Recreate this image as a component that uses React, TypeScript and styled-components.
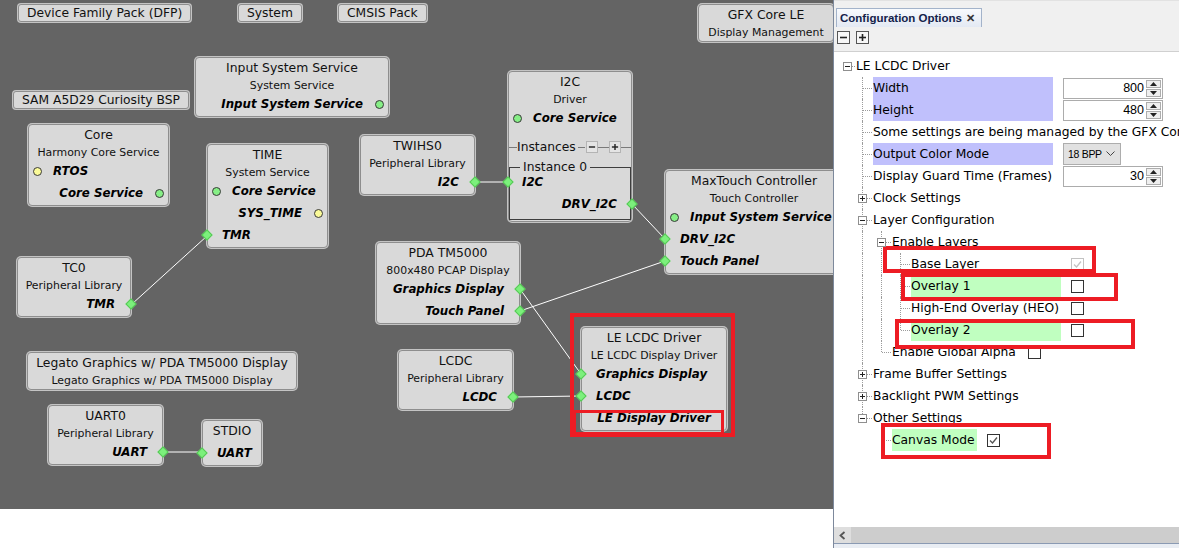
import React from 'react'
import styled, { createGlobalStyle } from 'styled-components'

const GlobalStyle = createGlobalStyle`
  html, body { margin: 0; padding: 0; background: #fff; }
  body { font-family: "DejaVu Sans", Verdana, sans-serif; }
  * { box-sizing: border-box; }
`

const Screen = styled.div`
  display: flex;
  width: 1179px;
  height: 548px;
  overflow: hidden;
`

const CanvasColumn = styled.div`
  width: 833px;
  flex: none;
  display: flex;
  flex-direction: column;
`

const Canvas = styled.div`
  position: relative;
  height: 509px;
  background: #646464;
  overflow: hidden;
`

const Wires = styled.svg`
  position: absolute;
  left: 0;
  top: 0;
`

const Pill = styled.div<{ $x: number; $y: number }>`
  position: absolute;
  left: ${p => p.$x}px;
  top: ${p => p.$y}px;
  height: 18px;
  padding: 0 8px;
  font-size: 12.3px;
  line-height: 16px;
  color: #111;
  white-space: nowrap;
  background: #d9d9d9;
  border: 1px solid #8e8e8e;
  border-radius: 3px;
  box-shadow: 0 0 0 1px #c4c4c4;
`

const NodeBox = styled.div<{ $x: number; $y: number; $w: number }>`
  position: absolute;
  left: ${p => p.$x}px;
  top: ${p => p.$y}px;
  width: ${p => p.$w}px;
  display: flex;
  flex-direction: column;
  padding-bottom: 1px;
  background: #d9d9d9;
  border: 1px solid #8e8e8e;
  border-radius: 4px;
  box-shadow: 0 0 0 1px #c4c4c4;
  color: #111;
`

const Title = styled.div`
  height: 19px;
  line-height: 20px;
  font-size: 12.4px;
  text-align: center;
  white-space: nowrap;
`

const Sub = styled.div`
  height: 16px;
  line-height: 17px;
  font-size: 10.9px;
  text-align: center;
  white-space: nowrap;
`

type Side = 'left' | 'right' | 'center'
type Kind = 'dot' | 'ydot' | 'diamond' | 'none'

const PortRow = styled.div<{ $side: Side; $kind: Kind; $group?: boolean }>`
  position: relative;
  height: 22px;
  display: flex;
  align-items: center;
  justify-content: ${p => (p.$side === 'left' ? 'flex-start' : p.$side === 'right' ? 'flex-end' : 'center')};
  padding-left: ${p => (p.$side !== 'left' ? 0 : p.$kind === 'diamond' ? (p.$group ? 12 : 14) : 24)}px;
  padding-right: ${p => (p.$side !== 'right' ? 0 : p.$kind === 'diamond' ? (p.$group ? 13 : 15) : 25)}px;
  font-size: 11.8px;
  font-weight: bold;
  font-style: oblique;
  color: #000;
  white-space: nowrap;
`

const Dot = styled.span<{ $side: Side; $yellow?: boolean }>`
  position: absolute;
  top: 50%;
  ${p => (p.$side === 'left' ? 'left' : 'right')}: 4px;
  width: 9px;
  height: 9px;
  margin-top: -4.5px;
  border-radius: 50%;
  background: ${p => (p.$yellow ? '#fbfb98' : '#86ef86')};
  border: 1px solid #3a3a3a;
`

const Diamond = styled.span<{ $side: Side; $off: number }>`
  position: absolute;
  top: 50%;
  ${p => (p.$side === 'left' ? 'left' : 'right')}: ${p => p.$off}px;
  width: 8px;
  height: 8px;
  margin-top: -4px;
  transform: rotate(45deg);
  background: #7cf07c;
  border: 1px solid #55c855;
`

interface PortDef {
  label: string
  side: Side
  kind: Kind
}

const Port = ({ port, group }: { port: PortDef; group?: boolean }) => (
  <PortRow $side={port.side} $kind={port.kind} $group={group}>
    {(port.kind === 'dot' || port.kind === 'ydot') && <Dot $side={port.side} $yellow={port.kind === 'ydot'} />}
    {port.kind === 'diamond' && <Diamond $side={port.side} $off={group ? -6 : -5} />}
    {port.label}
  </PortRow>
)

const InstancesRow = styled.div`
  height: 24px;
  margin-top: 6px;
  display: flex;
  align-items: center;
  font-size: 12.3px;
  color: #111;
`

const Rule = styled.span<{ $w?: number }>`
  height: 1px;
  background: #7a7a7a;
  flex: ${p => (p.$w ? `none` : '1')};
  width: ${p => (p.$w ? `${p.$w}px` : 'auto')};
  margin: ${p => (p.$w ? '0' : '0 1px 0 2px')};
`

const MiniBtn = styled.span`
  width: 12px;
  height: 12px;
  flex: none;
  display: flex;
  align-items: center;
  justify-content: center;
  background: #e4e4e4;
  border: 1px solid #b4b4b4;
`

const Group = styled.fieldset`
  margin: 1px 0 0 0;
  padding: 0 0 4px 0;
  min-width: 0;
  border: 1px solid #3e3e3e;
`

const GroupLegend = styled.legend`
  margin-left: 10px;
  padding: 0 3px;
  font-size: 12.3px;
  line-height: 14px;
  color: #111;
`

const GroupBody = styled.div`
  margin-top: -3px;
`

const Annot = styled.div<{ $x: number; $y: number; $w: number; $h: number; $t: number }>`
  position: absolute;
  left: ${p => p.$x}px;
  top: ${p => p.$y}px;
  width: ${p => p.$w}px;
  height: ${p => p.$h}px;
  border: ${p => p.$t}px solid #ed1c24;
  pointer-events: none;
`

const BlankArea = styled.div`
  flex: 1;
  background: #fff;
`

/* ---------- right panel ---------- */

const Panel = styled.div`
  position: relative;
  flex: 1;
  height: 548px;
  display: flex;
  flex-direction: column;
  border-left: 1px solid #7d899c;
  background: #fff;
  overflow: hidden;
  font-family: "DejaVu Sans", Verdana, sans-serif;
  font-size: 12.3px;
  color: #000;
`

const TabStrip = styled.div`
  height: 27px;
  flex: none;
  display: flex;
  align-items: flex-end;
  padding-left: 2px;
  background: #f0f0f0;
  border-top: 1px solid #e2e2e2;
`

const Tab = styled.div`
  height: 19px;
  width: 146px;
  display: flex;
  align-items: center;
  justify-content: space-between;
  padding: 0 6px 0 3px;
  background: linear-gradient(#f8fafd, #e3e9f3);
  border: 1px solid #a3b3ca;
  border-bottom: none;
  font-family: "Liberation Sans", Arial, sans-serif;
  font-weight: bold;
  font-size: 11.5px;
  color: #14224a;
`

const TabClose = styled.span`
  font-size: 11px;
  color: #333;
`

const Toolbar = styled.div`
  height: 25px;
  flex: none;
  display: flex;
  align-items: flex-start;
  gap: 6px;
  padding: 4px 0 0 3px;
  background: #f0f0f0;
  border-bottom: 1px solid #d0d0d0;
`

const ToolBtn = styled.span`
  width: 13px;
  height: 13px;
  display: flex;
  align-items: center;
  justify-content: center;
  background: #f7f7f7;
  border: 1px solid #555;
`

const Tree = styled.div`
  flex: 1;
  padding-top: 3px;
  overflow: hidden;
`

const Row = styled.div<{ $pl: number }>`
  height: 22px;
  display: flex;
  align-items: center;
  white-space: nowrap;
  padding-left: ${p => p.$pl}px;
`

type VLine = 'full' | 'half' | 'none'

const TreeCell = styled.span<{ $v: VLine; $h: boolean; $w?: number; $from?: number }>`
  position: relative;
  flex: none;
  width: ${p => p.$w ?? 19}px;
  height: 22px;
  &::before {
    content: '';
    display: ${p => (p.$v === 'none' ? 'none' : 'block')};
    position: absolute;
    left: 9px;
    top: 0;
    height: ${p => (p.$v === 'full' ? 22 : 11)}px;
    border-left: 1px dotted #9c9c9c;
  }
  &::after {
    content: '';
    display: ${p => (p.$h ? 'block' : 'none')};
    position: absolute;
    left: ${p => p.$from ?? 10}px;
    right: 0;
    top: 11px;
    border-top: 1px dotted #9c9c9c;
  }
`

const ExpanderBox = styled.svg`
  position: absolute;
  left: 5px;
  top: 7px;
  z-index: 1;
`

const Label = styled.span<{ $bg?: string; $w?: number }>`
  display: inline-block;
  margin-left: 1px;
  height: 22px;
  line-height: 22px;
  padding-right: 2px;
  background: ${p => p.$bg ?? 'transparent'};
  width: ${p => (p.$w ? `${p.$w}px` : 'auto')};
  flex: none;
`

const Spinner = styled.div`
  margin-left: 10px;
  width: 100px;
  height: 21px;
  flex: none;
  display: flex;
  background: #fff;
  border: 1px solid #acacac;
`

const SpinValue = styled.span`
  flex: 1;
  text-align: right;
  padding-right: 2px;
  line-height: 19px;
  font-family: "Liberation Sans", Arial, sans-serif;
  font-size: 12.5px;
`

const SpinButtons = styled.div`
  width: 16px;
  display: flex;
  flex-direction: column;
  gap: 1px;
  padding: 1px 1px 1px 0;
`

const SpinBtn = styled.span`
  flex: 1;
  display: flex;
  align-items: center;
  justify-content: center;
  background: #efefef;
  border: 1px solid #adadad;
`

const Select = styled.div`
  margin-left: 10px;
  width: 58px;
  height: 22px;
  flex: none;
  display: flex;
  align-items: center;
  justify-content: space-between;
  padding: 0 5px 0 4px;
  background: #e1e1e1;
  border: 1px solid #adadad;
  font-family: "Liberation Sans", Arial, sans-serif;
  font-size: 10.5px;
  letter-spacing: -0.3px;
`

const Check = styled.span<{ $disabled?: boolean }>`
  margin-left: 10px;
  width: 13px;
  height: 13px;
  flex: none;
  display: flex;
  align-items: center;
  justify-content: center;
  background: #fff;
  border: 1px solid ${p => (p.$disabled ? '#c2c2c2' : '#333')};
`

const HScroll = styled.div`
  height: 16px;
  flex: none;
  display: flex;
  background: #cdcdcd;
`

const ScrollArrow = styled.div`
  width: 17px;
  display: flex;
  align-items: center;
  justify-content: center;
  background: #dedede;
`

const StatusStrip = styled.div`
  height: 5px;
  flex: none;
  background: #e9edf3;
  border-top: 1px solid #8a9ab3;
`

/* ---------- data ---------- */

interface NodeDef {
  x: number
  y: number
  w: number
  title: string
  sub?: string
  ports: PortDef[]
}

const nodes: NodeDef[] = [
  { x: 195, y: 57, w: 194, title: 'Input System Service', sub: 'System Service', ports: [{ label: 'Input System Service', side: 'right', kind: 'dot' }] },
  {
    x: 28, y: 124, w: 141, title: 'Core', sub: 'Harmony Core Service',
    ports: [{ label: 'RTOS', side: 'left', kind: 'ydot' }, { label: 'Core Service', side: 'right', kind: 'dot' }],
  },
  {
    x: 207, y: 144, w: 121, title: 'TIME', sub: 'System Service',
    ports: [
      { label: 'Core Service', side: 'left', kind: 'dot' },
      { label: 'SYS_TIME', side: 'right', kind: 'ydot' },
      { label: 'TMR', side: 'left', kind: 'diamond' },
    ],
  },
  { x: 17, y: 257, w: 114, title: 'TC0', sub: 'Peripheral Library', ports: [{ label: 'TMR', side: 'right', kind: 'diamond' }] },
  { x: 360, y: 135, w: 115, title: 'TWIHS0', sub: 'Peripheral Library', ports: [{ label: 'I2C', side: 'right', kind: 'diamond' }] },
  {
    x: 665, y: 170, w: 178, title: 'MaxTouch Controller', sub: 'Touch Controller',
    ports: [
      { label: 'Input System Service', side: 'left', kind: 'dot' },
      { label: 'DRV_I2C', side: 'left', kind: 'diamond' },
      { label: 'Touch Panel', side: 'left', kind: 'diamond' },
    ],
  },
  {
    x: 376, y: 242, w: 144, title: 'PDA TM5000', sub: '800x480 PCAP Display',
    ports: [{ label: 'Graphics Display', side: 'right', kind: 'diamond' }, { label: 'Touch Panel', side: 'right', kind: 'diamond' }],
  },
  {
    x: 581, y: 327, w: 146, title: 'LE LCDC Driver', sub: 'LE LCDC Display Driver',
    ports: [
      { label: 'Graphics Display', side: 'left', kind: 'diamond' },
      { label: 'LCDC', side: 'left', kind: 'diamond' },
      { label: 'LE Display Driver', side: 'center', kind: 'none' },
    ],
  },
  { x: 398, y: 350, w: 115, title: 'LCDC', sub: 'Peripheral Library', ports: [{ label: 'LCDC', side: 'right', kind: 'diamond' }] },
  { x: 27, y: 352, w: 270, title: 'Legato Graphics w/ PDA TM5000 Display', sub: 'Legato Graphics w/ PDA TM5000 Display', ports: [] },
  { x: 48, y: 405, w: 115, title: 'UART0', sub: 'Peripheral Library', ports: [{ label: 'UART', side: 'right', kind: 'diamond' }] },
  { x: 202, y: 420, w: 60, title: 'STDIO', ports: [{ label: 'UART', side: 'left', kind: 'diamond' }] },
  { x: 698, y: 4, w: 136, title: 'GFX Core LE', sub: 'Display Management', ports: [] },
]

const pills = [
  { x: 18, y: 4, text: 'Device Family Pack (DFP)' },
  { x: 238, y: 4, text: 'System' },
  { x: 338, y: 4, text: 'CMSIS Pack' },
  { x: 13, y: 91, text: 'SAM A5D29 Curiosity BSP' },
]

const wires: [number, number, number, number][] = [
  [132, 304, 207, 236],
  [475, 182, 508, 182],
  [632, 204, 665, 239],
  [520, 289, 581, 374],
  [520, 311, 665, 261],
  [513, 397, 581, 396],
  [163, 452, 202, 452],
]

type Value =
  | { type: 'spin'; v: string }
  | { type: 'select'; v: string }
  | { type: 'check'; checked?: boolean; disabled?: boolean }

interface TreeRow {
  label: string
  level: number
  guides?: boolean[]
  last?: boolean
  exp?: '+' | '-'
  bg?: string
  w?: number
  value?: Value
}

const LAV = '#c0c0fc'
const GRN = '#c0ffc0'

const rows: TreeRow[] = [
  { label: 'LE LCDC Driver', level: 0, exp: '-' },
  { label: 'Width', level: 1, bg: LAV, w: 180, value: { type: 'spin', v: '800' } },
  { label: 'Height', level: 1, bg: LAV, w: 180, value: { type: 'spin', v: '480' } },
  { label: 'Some settings are being managed by the GFX Core LE component.', level: 1 },
  { label: 'Output Color Mode', level: 1, bg: LAV, w: 180, value: { type: 'select', v: '18 BPP' } },
  { label: 'Display Guard Time (Frames)', level: 1, w: 180, value: { type: 'spin', v: '30' } },
  { label: 'Clock Settings', level: 1, exp: '+' },
  { label: 'Layer Configuration', level: 1, exp: '-' },
  { label: 'Enable Layers', level: 2, guides: [true], exp: '-' },
  { label: 'Base Layer', level: 3, guides: [true, true], w: 150, value: { type: 'check', checked: true, disabled: true } },
  { label: 'Overlay 1', level: 3, guides: [true, true], bg: GRN, w: 150, value: { type: 'check' } },
  { label: 'High-End Overlay (HEO)', level: 3, guides: [true, true], w: 150, value: { type: 'check' } },
  { label: 'Overlay 2', level: 3, guides: [true, true], bg: GRN, w: 150, last: true, value: { type: 'check' } },
  { label: 'Enable Global Alpha', level: 2, guides: [true], last: true, value: { type: 'check' } },
  { label: 'Frame Buffer Settings', level: 1, exp: '+' },
  { label: 'Backlight PWM Settings', level: 1, exp: '+' },
  { label: 'Other Settings', level: 1, exp: '-', last: true },
  { label: 'Canvas Mode', level: 2, guides: [false], bg: GRN, last: true, value: { type: 'check', checked: true } },
]

/* ---------- small drawings ---------- */

const Expander = ({ kind }: { kind: '+' | '-' }) => (
  <ExpanderBox width="9" height="9" viewBox="0 0 9 9">
    <rect x="0.5" y="0.5" width="8" height="8" fill="#fff" stroke="#8f8f8f" />
    <line x1="2" y1="4.5" x2="7" y2="4.5" stroke="#222" />
    {kind === '+' && <line x1="4.5" y1="2" x2="4.5" y2="7" stroke="#222" />}
  </ExpanderBox>
)

const Tick = ({ color }: { color: string }) => (
  <svg width="11" height="11" viewBox="0 0 11 11">
    <polyline points="2,5.5 4.5,8 9,2.5" fill="none" stroke={color} strokeWidth="1.3" />
  </svg>
)

const Tri = ({ up }: { up?: boolean }) => (
  <svg width="7" height="4" viewBox="0 0 7 4">
    <polygon points={up ? '0,4 3.5,0 7,4' : '0,0 3.5,4 7,0'} fill="#222" />
  </svg>
)

const PlusMinus = ({ plus, size = 9 }: { plus?: boolean; size?: number }) => (
  <svg width={size} height={size} viewBox="0 0 9 9">
    <line x1="1" y1="4.5" x2="8" y2="4.5" stroke="#222" strokeWidth="1.6" />
    {plus && <line x1="4.5" y1="1" x2="4.5" y2="8" stroke="#222" strokeWidth="1.6" />}
  </svg>
)

const ValueCell = ({ value }: { value: Value }) => {
  if (value.type === 'spin')
    return (
      <Spinner>
        <SpinValue>{value.v}</SpinValue>
        <SpinButtons>
          <SpinBtn><Tri up /></SpinBtn>
          <SpinBtn><Tri /></SpinBtn>
        </SpinButtons>
      </Spinner>
    )
  if (value.type === 'select')
    return (
      <Select>
        {value.v}
        <svg width="9" height="6" viewBox="0 0 9 6">
          <polyline points="0.5,0.5 4.5,4.5 8.5,0.5" fill="none" stroke="#444" />
        </svg>
      </Select>
    )
  return (
    <Check $disabled={value.disabled}>
      {value.checked && <Tick color={value.disabled ? '#c4c4c4' : '#555'} />}
    </Check>
  )
}

const TreeLine = ({ row }: { row: TreeRow }) => {
  if (row.level === 0)
    return (
      <Row $pl={4}>
        <TreeCell $v="none" $h $w={17} $from={14}>
          {row.exp && <Expander kind={row.exp} />}
        </TreeCell>
        <Label>{row.label}</Label>
      </Row>
    )
  return (
    <Row $pl={19}>
      {(row.guides ?? []).map((g, i) => (
        <TreeCell key={i} $v={g ? 'full' : 'none'} $h={false} />
      ))}
      <TreeCell $v={row.last ? 'half' : 'full'} $h $from={row.exp ? 14 : 10}>
        {row.exp && <Expander kind={row.exp} />}
      </TreeCell>
      <Label $bg={row.bg} $w={row.w}>{row.label}</Label>
      {row.value && <ValueCell value={row.value} />}
    </Row>
  )
}

/* ---------- page ---------- */

const App = () => (
  <>
    <GlobalStyle />
    <Screen>
      <CanvasColumn>
        <Canvas>
          <Wires width="833" height="509">
            {wires.map(([x1, y1, x2, y2], i) => (
              <line key={i} x1={x1} y1={y1} x2={x2} y2={y2} stroke="#fff" strokeWidth="1" />
            ))}
          </Wires>

          {pills.map(p => (
            <Pill key={p.text} $x={p.x} $y={p.y}>{p.text}</Pill>
          ))}

          {nodes.map(n => (
            <NodeBox key={n.title + n.x} $x={n.x} $y={n.y} $w={n.w}>
              <Title>{n.title}</Title>
              {n.sub ? <Sub>{n.sub}</Sub> : <div style={{ height: 2 }} />}
              {n.ports.map(p => (
                <Port key={p.label} port={p} />
              ))}
            </NodeBox>
          ))}

          <NodeBox $x={508} $y={71} $w={124}>
            <Title>I2C</Title>
            <Sub>Driver</Sub>
            <Port port={{ label: 'Core Service', side: 'left', kind: 'dot' }} />
            <InstancesRow>
              <Rule $w={8} />
              Instances
              <Rule />
              <MiniBtn><PlusMinus size={8} /></MiniBtn>
              <Rule $w={11} />
              <MiniBtn><PlusMinus plus size={8} /></MiniBtn>
              <Rule $w={10} />
            </InstancesRow>
            <Group>
              <GroupLegend>Instance 0</GroupLegend>
              <GroupBody>
                <Port group port={{ label: 'I2C', side: 'left', kind: 'diamond' }} />
                <Port group port={{ label: 'DRV_I2C', side: 'right', kind: 'diamond' }} />
              </GroupBody>
            </Group>
          </NodeBox>

          <Annot $x={570} $y={313} $w={165} $h={124} $t={4} />
          <Annot $x={573} $y={410} $w={151} $h={25} $t={3} />
        </Canvas>
        <BlankArea />
      </CanvasColumn>

      <Panel>
        <TabStrip>
          <Tab>
            Configuration Options
            <TabClose>✕</TabClose>
          </Tab>
        </TabStrip>
        <Toolbar>
          <ToolBtn><PlusMinus /></ToolBtn>
          <ToolBtn><PlusMinus plus /></ToolBtn>
        </Toolbar>
        <Tree>
          {rows.map((r, i) => (
            <TreeLine key={i} row={r} />
          ))}
        </Tree>
        <HScroll>
          <ScrollArrow>
            <svg width="7" height="9" viewBox="0 0 7 9">
              <polyline points="5.5,1 1.5,4.5 5.5,8" fill="none" stroke="#555" strokeWidth="1.8" />
            </svg>
          </ScrollArrow>
        </HScroll>
        <StatusStrip />

        <Annot $x={49} $y={246} $w={213} $h={27} $t={4} />
        <Annot $x={67} $y={273} $w={217} $h={28} $t={4} />
        <Annot $x={61} $y={319} $w={240} $h={30} $t={4} />
        <Annot $x={47} $y={423} $w={170} $h={36} $t={4} />
      </Panel>
    </Screen>
  </>
)

export default App
